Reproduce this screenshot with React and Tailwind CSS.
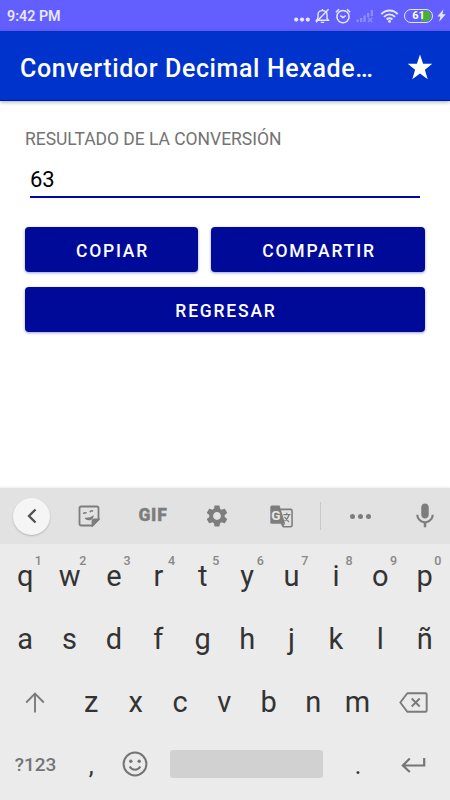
import { MdMic, MdSettings } from "react-icons/md";

const topKeys = ["q", "w", "e", "r", "t", "y", "u", "i", "o", "p"];
const middleKeys = ["a", "s", "d", "f", "g", "h", "j", "k", "l", "ñ"];
const bottomKeys = ["z", "x", "c", "v", "b", "n", "m"];

const StatusBar = () => {
  return (
    <div className="h-[31px] bg-[#635fff] flex items-center justify-between pl-[7px] pr-[4px] text-[#e8e7ff]">
      <span className="text-[14.3px] font-semibold leading-none pt-[1px]">
        9:42 PM
      </span>
      <div className="flex items-center">
        {/* More notifications */}
        <svg
          className="mr-[1px]"
          width="16"
          height="20"
          viewBox="0 0 16 20"
          fill="currentColor"
        >
          <circle cx="2.2" cy="13.6" r="2.1" />
          <circle cx="8" cy="13.6" r="2.1" />
          <circle cx="13.8" cy="13.6" r="2.1" />
        </svg>

        {/* Silent */}
        <svg
          className="ml-[4px]"
          width="15"
          height="16"
          viewBox="0 0 15 16"
          fill="none"
          stroke="currentColor"
          strokeWidth="1.4"
        >
          <path d="M1.6 12.2h11.8L12 10.2V6.4C12 4 10 2.600 7.500 2.600S3 4 3 6.400v3.800z" />
          <path d="M5.800 14.400h3.400M7.500 1v1.600M1 14.200L13.600 1.200" />
        </svg>

        {/* Alarm */}
        <svg
          className="ml-[5px]"
          width="16"
          height="16"
          viewBox="0 0 16 16"
          fill="none"
          stroke="currentColor"
          strokeWidth="1.5"
        >
          <circle cx="8" cy="8.6" r="6.1" />
          <path d="M5.3 7.6L8 9.6l2.7-2M.9 4.2L4 1.3M15.1 4.2L12 1.3" />
        </svg>

        {/* No signal */}
        <svg
          className="ml-[5px] text-[#8f8cff]"
          width="18"
          height="16"
          viewBox="0 0 18 16"
          fill="currentColor"
        >
          <path d="M.5 11.5h2.3V14H.5zM4 10h2.3v4H4zM7.5 7.5h2.3V14H7.5zM11 5h2.3v4H11zM14.7 2H17v6h-2.3z" />
          <path
            d="M12 9.8l4.2 4.2M16.2 9.8L12 14"
            stroke="currentColor"
            strokeWidth="1.4"
          />
        </svg>

        {/* Wifi */}
        <svg
          className="ml-[6px]"
          width="19"
          height="16"
          viewBox="0 0 19 16"
          fill="none"
          stroke="currentColor"
          strokeWidth="2"
        >
          <path d="M1.3 6.1C6 1.3 13 1.3 17.7 6.1M4 8.9c3.3-3.2 7.7-3.2 11 0M6.6 11.5c1.9-1.6 3.9-1.6 5.800 0" />
          <circle cx="9.5" cy="13.4" r="1.4" fill="currentColor" stroke="none" />
        </svg>

        {/* Battery */}
        <div className="ml-[5px] w-[29px] h-[14px] rounded-full border-[1.5px] border-[#e8e7ff] p-px flex">
          <div className="w-full rounded-full bg-linear-to-r from-transparent from-60% to-[#45b32f] to-60% text-white text-[11px] leading-[10px] font-bold text-center">
            61
          </div>
        </div>

        {/* Charging */}
        <svg
          className="ml-[4px]"
          width="9"
          height="13"
          viewBox="0 0 9 13"
          fill="currentColor"
        >
          <path d="M6.5.3L.4 7.5h3L2.2 12.7 8.7 5.2H5.4z" />
        </svg>
      </div>
    </div>
  );
};

const Header = () => {
  return (
    <div className="relative h-[70px] bg-[#0033cc] border-b border-[#0018a0] shadow-[0_1px_4px_rgba(0,0,0,0.35)] flex items-center justify-between pl-5 pr-[17px] text-white">
      <h1 className="text-[25px] leading-none font-medium tracking-[0.62px] whitespace-nowrap pt-[5px]">
        Convertidor Decimal Hexade…
      </h1>
      <svg
        className="mt-[2px]"
        width="26"
        height="26"
        viewBox="0 0 26 26"
        fill="currentColor"
      >
        <path d="M13 .5l3.1 9.3H25.3l-7.4 6 2.8 9.4L13 19.6l-7.7 5.6 2.8-9.4-7.4-6h9.2z" />
      </svg>
    </div>
  );
};

const ActionButton = ({ children, className }) => {
  return (
    <button
      className={`h-[45px] rounded-[4px] bg-[#000a99] text-white text-[17.5px] font-medium tracking-[1.8px] shadow-[0_1px_3px_rgba(0,10,153,0.4)] pt-[3px] pl-[2px] ${className}`}
    >
      {children}
    </button>
  );
};

const Key = ({ label, hint }) => {
  return (
    <div className="relative w-[44.4px] h-full flex justify-center text-[29px] leading-[64px] text-[#333333]">
      {label}
      {hint !== undefined && (
        <span className="absolute right-[5.5px] top-[11px] text-[12.5px] leading-none font-medium text-[#888888]">
          {hint}
        </span>
      )}
    </div>
  );
};

const PunctuationKey = ({ label }) => {
  return (
    <div className="w-[44.4px] h-full flex justify-center text-[25px] leading-[66px] text-[#333333]">
      {label}
    </div>
  );
};

const KeyboardToolbar = () => {
  return (
    <div className="h-[56px] bg-[#e2e2e2] flex items-center text-[#7d7d7d]">
      <div className="w-[57px] pl-[13px]">
        <div className="w-[37px] h-[37px] rounded-full bg-[#f5f5f5] shadow-[0_1px_2px_rgba(0,0,0,0.2)] flex items-center justify-center">
          <svg
            width="12"
            height="16"
            viewBox="0 0 12 16"
            fill="none"
            stroke="#505050"
            strokeWidth="2.3"
          >
            <path d="M9.5 1.5L3 8l6.5 6.500" />
          </svg>
        </div>
      </div>

      {/* Sticker */}
      <div className="w-[64px] flex justify-center">
        <svg
          width="22"
          height="22"
          viewBox="0 0 22 22"
          fill="none"
          stroke="currentColor"
          strokeWidth="1.8"
        >
          <path d="M3.2 1.5h15.6q1.7 0 1.7 1.7V14.5l-6 6H3.2q-1.7 0-1.7-1.7V3.2q0-1.7 1.7-1.7z" />
          <path d="M20.5 14.5h-4.300q-1.700 0-1.700 1.700v4.300z" fill="currentColor" />
          <path d="M5.400 9q.8-2 3.300-.9M11.900 7.200q.8-2 3.200-1" strokeWidth="1.500" />
          <path
            d="M6.300 12.700q5.200.6 9.400-2.400-.1 4-3.700 4.900-3.600.8-5.700-2.500z"
            fill="currentColor"
            stroke="none"
          />
        </svg>
      </div>

      <div className="w-[64px] text-center text-[17.5px] leading-none font-black tracking-[0.8px] [-webkit-text-stroke:0.3px_#7d7d7d]">
        GIF
      </div>

      <div className="w-[64px] flex justify-center">
        <MdSettings size={26} />
      </div>

      {/* Translate */}
      <div className="w-[64px] flex justify-center">
        <svg width="23" height="23" viewBox="0 0 22 22" fill="none">
          <path
            d="M10 4.2h9.6q1.5 0 1.5 1.5v13.6q0 1.5-1.5 1.5h-6.7l-2-4"
            stroke="currentColor"
            strokeWidth="1.5"
          />
          <path
            d="M1.8.5h7.4l5.3 17.5H1.8Q.3 18 .3 16.5V2Q.3.5 1.8.5z"
            fill="currentColor"
          />
          <path d="M10.5 18h4l-2.5 3z" fill="currentColor" />
          <path
            d="M12.8 9.2h6.7M16 7.5v1.7M18.3 9.3q-1 3.7-4.3 5.9M13.9 11.2q1.7 3 4.3 5"
            stroke="currentColor"
            strokeWidth="1.2"
          />
          <text
            x="1.2"
            y="13.9"
            fontSize="13"
            fontWeight="700"
            fill="#e8e8e8"
          >
            G
          </text>
        </svg>
      </div>

      <div className="ml-[7px] w-px h-[28px] bg-[#c8c8c8]" />

      {/* More */}
      <div className="w-[79px] flex justify-center gap-[3px]">
        <span className="w-[5px] h-[5px] rounded-full bg-[#7d7d7d]" />
        <span className="w-[5px] h-[5px] rounded-full bg-[#7d7d7d]" />
        <span className="w-[5px] h-[5px] rounded-full bg-[#7d7d7d]" />
      </div>

      <div className="w-[49px] flex justify-center">
        <MdMic size={30} />
      </div>
    </div>
  );
};

const Keyboard = () => {
  return (
    <div className="h-[312px] bg-[#ebebeb] shadow-[0_-1px_2px_rgba(0,0,0,0.08)]">
      <KeyboardToolbar />

      <div className="h-[63px] px-[3px] flex">
        {topKeys.map((key, i) => (
          <Key key={key} label={key} hint={(i + 1) % 10} />
        ))}
      </div>

      <div className="h-[63px] px-[3px] flex">
        {middleKeys.map((key) => (
          <Key key={key} label={key} />
        ))}
      </div>

      <div className="h-[63px] flex items-center text-[#7a7a7a]">
        {/* Shift */}
        <div className="w-[69px] flex justify-center pt-[2px]">
          <svg
            width="20"
            height="21"
            viewBox="0 0 20 21"
            fill="none"
            stroke="currentColor"
            strokeWidth="1.9"
          >
            <path d="M10 20.5V2M1.200 10.500L10 1.700l8.800 8.800" />
          </svg>
        </div>
        {bottomKeys.map((key) => (
          <Key key={key} label={key} />
        ))}
        {/* Delete */}
        <div className="w-[67px] flex justify-center pt-[2px]">
          <svg
            width="29"
            height="21"
            viewBox="0 0 29 21"
            fill="none"
            stroke="currentColor"
            strokeWidth="1.9"
          >
            <path
              d="M8.3 1.2h18q1.4 0 1.4 1.4v15.8q0 1.4-1.4 1.4h-18L1.3 10.5z"
              strokeLinejoin="round"
            />
            <path d="M12.7 6.5l8 8M20.7 6.5l-8 8" />
          </svg>
        </div>
      </div>

      <div className="h-[63px] flex items-center text-[#757575]">
        <div className="w-[69px] pl-[2px] text-center text-[19px] font-medium leading-none">
          ?123
        </div>
        <PunctuationKey label="," />
        <div className="w-[44.4px] flex justify-center pb-[1px] pr-[1px]">
          <svg
            width="26"
            height="26"
            viewBox="0 0 26 26"
            fill="none"
            stroke="currentColor"
            strokeWidth="2"
          >
            <circle cx="13" cy="13" r="11.4" />
            <circle cx="8.8" cy="10.3" r="1.7" fill="currentColor" stroke="none" />
            <circle cx="17.2" cy="10.3" r="1.7" fill="currentColor" stroke="none" />
            <path d="M7.7 15.5q1.900 3.300 5.300 3.300t5.300-3.300" />
          </svg>
        </div>
        <div className="ml-[12px] mr-[13px] mb-[2px] w-[153px] h-[28px] rounded-[3px] bg-[#d1d1d1]" />
        <PunctuationKey label="." />
        {/* Enter */}
        <div className="w-[67px] flex justify-center">
          <svg
            width="25"
            height="16"
            viewBox="0 0 25 16"
            fill="none"
            stroke="currentColor"
            strokeWidth="2.2"
          >
            <path d="M23.2 1v7.5H2M8.8 1.5l-7 7 7 6.5" />
          </svg>
        </div>
      </div>
    </div>
  );
};

const App = () => {
  return (
    <div className="w-[450px] h-[800px] overflow-hidden bg-white flex flex-col font-[Roboto,sans-serif]">
      <StatusBar />
      <Header />

      <div className="flex-1 px-[25px] pt-[28px]">
        <p className="text-[17.5px] leading-[21px] tracking-[-0.03px] text-[#737373]">
          RESULTADO DE LA CONVERSIÓN
        </p>
        <div className="mx-[5px] mt-[14px] h-[34px] border-b-2 border-[#000a99] text-[22px] leading-[31px] text-black">
          63
        </div>

        <div className="mt-[29px] flex gap-[13px]">
          <ActionButton className="w-[173px]">COPIAR</ActionButton>
          <ActionButton className="flex-1">COMPARTIR</ActionButton>
        </div>
        <ActionButton className="w-full mt-[15px]">REGRESAR</ActionButton>
      </div>

      <Keyboard />
    </div>
  );
};

export default App;
